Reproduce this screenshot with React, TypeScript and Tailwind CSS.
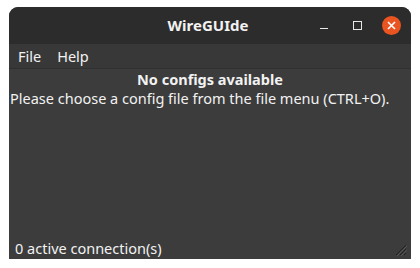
import React from "react";

export default function App() {
  const font = { fontFamily: '"Noto Sans", "Open Sans", sans-serif' };
  return (
    <div className="w-[420px] h-[268px] bg-white pt-[7px] pl-[9px]" style={font}>
      <div className="w-[402px] h-[252px] flex flex-col rounded-t-[9px] overflow-hidden bg-[#3c3c3c] text-[#f2f2f2]">
        <div className="relative h-[37px] bg-[#2c2c2c] flex items-center justify-center shrink-0">
          <span className="text-[15px] font-bold pr-[4px]">WireGUIde</span>
          <div className="absolute right-[3px] top-0 h-full flex items-center">
            <div className="w-[34px] h-full flex items-center justify-center">
              <div className="w-[8px] h-[1px] bg-[#e8e8e8] mt-[6px]" />
            </div>
            <div className="w-[33px] h-full flex items-center justify-center">
              <div className="w-[9px] h-[9px] border border-[#e8e8e8]" />
            </div>
            <div className="w-[34px] h-full flex items-center justify-center">
              <div className="w-[19px] h-[19px] rounded-full bg-[#e95420] flex items-center justify-center">
                <svg width="9" height="9" viewBox="0 0 9 9">
                  <path d="M1 1 L8 8 M8 1 L1 8" stroke="#fff" strokeWidth="1.6" />
                </svg>
              </div>
            </div>
          </div>
        </div>
        <div className="h-[25px] bg-[#383838] border-b border-[#303030] flex items-center text-[14.5px] pl-[9px] pt-[2px] gap-[16px] shrink-0">
          <span>File</span>
          <span>Help</span>
        </div>
        <div className="flex-1 flex flex-col text-[14.5px] leading-[19px]">
          <div className="text-center font-bold mt-[1px]">No configs available</div>
          <div className="pl-[1px]">Please choose a config file from the file menu (CTRL+O).</div>
          <div className="flex-1" />
          <div className="relative h-[22px] flex items-center pl-[6px]">
            <span>0 active connection(s)</span>
            <svg className="absolute right-[4px] bottom-[3px]" width="12" height="12" viewBox="0 0 12 12">
              <path d="M11 1 L1 11 M11 5 L5 11 M11 9 L9 11" stroke="#222" strokeWidth="1" />
              <path d="M12 2 L2 12 M12 6 L6 12" stroke="#555" strokeWidth="1" />
            </svg>
          </div>
        </div>
      </div>
    </div>
  );
}
